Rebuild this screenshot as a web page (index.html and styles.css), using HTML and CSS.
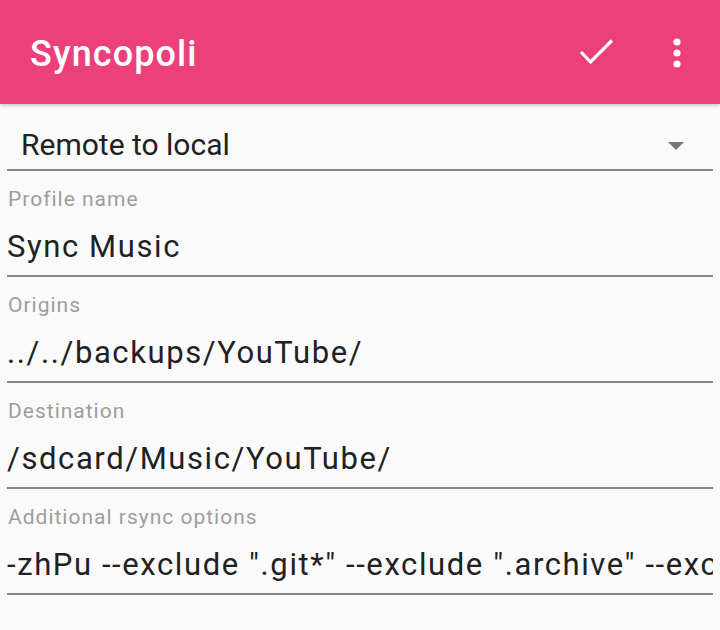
FILE: index.html
```html
<!DOCTYPE html>
<html lang="en">
<head>
<meta charset="utf-8">
<title>Syncopoli</title>
<link rel="stylesheet" href="styles.css">
</head>
<body>
<header class="appbar">
  <h1 class="title">Syncopoli</h1>
  <div class="actions">
    <svg class="icon-check" width="40" height="28" viewBox="0 0 40 28" aria-label="Save">
      <polyline points="4,13 13.5,23 35,1.5" fill="none" stroke="#fff" stroke-width="3.2"/>
    </svg>
    <svg class="icon-more" width="12" height="34" viewBox="0 0 12 34" aria-label="More options">
      <circle cx="6" cy="6" r="3.6" fill="#fff"/>
      <circle cx="6" cy="17" r="3.6" fill="#fff"/>
      <circle cx="6" cy="28" r="3.6" fill="#fff"/>
    </svg>
  </div>
</header>
<main class="form">
  <div class="spinner">
    <span class="spinner-text">Remote to local</span>
    <span class="spinner-arrow"></span>
  </div>
  <div class="field">
    <div class="label">Profile name</div>
    <div class="value">Sync Music</div>
  </div>
  <div class="field">
    <div class="label">Origins</div>
    <div class="value">../../backups/YouTube/</div>
  </div>
  <div class="field">
    <div class="label">Destination</div>
    <div class="value">/sdcard/Music/YouTube/</div>
  </div>
  <div class="field">
    <div class="label">Additional rsync options</div>
    <div class="value">-zhPu --exclude ".git*" --exclude ".archive" --exclude ".thumbnails"</div>
  </div>
</main>
</body>
</html>
```
FILE: styles.css
```css
* { box-sizing: border-box; }
html, body { margin: 0; padding: 0; }
body {
  width: 720px;
  height: 630px;
  overflow: hidden;
  background: #fafafa;
  font-family: Roboto, "Noto Sans", sans-serif;
  color: #212121;
}
.appbar {
  height: 104px;
  background: #ec407a;
  display: flex;
  align-items: center;
  padding: 0 0 0 30px;
  box-shadow: 0 1px 4px rgba(0,0,0,0.25);
  position: relative;
}
.title {
  margin: 0;
  font-size: 36px;
  font-weight: 500;
  letter-spacing: 1.1px;
  color: #fff;
  line-height: 1;
  flex: 1;
  padding-top: 4px;
}
.actions {
  display: flex;
  align-items: center;
  padding-right: 37px;
  gap: 54px;
}
.icon-check { display: block; margin-top: 2px; }
.icon-more { display: block; margin-top: 2px; }
.form {
  padding: 0 7px;
}
.spinner {
  display: flex;
  align-items: center;
  padding: 23px 29px 6px 14px;
  border-bottom: 2px solid #868686;
}
.spinner-text {
  flex: 1;
  font-size: 30px;
  line-height: 36px;
}
.spinner-arrow {
  width: 0;
  height: 0;
  border-left: 8.5px solid transparent;
  border-right: 8.5px solid transparent;
  border-top: 8.5px solid #757575;
  margin-top: 2px;
}
.field {
  padding: 16px 0 10px 0;
  border-bottom: 2px solid #868686;
}
.label {
  padding-left: 1px;
  font-size: 21px;
  line-height: 24px;
  letter-spacing: 1px;
  color: #9e9e9e;
}
.value {
  margin-top: 18px;
  font-size: 31px;
  line-height: 36px;
  letter-spacing: 1.6px;
  color: #212121;
  white-space: nowrap;
  overflow: hidden;
}
```
